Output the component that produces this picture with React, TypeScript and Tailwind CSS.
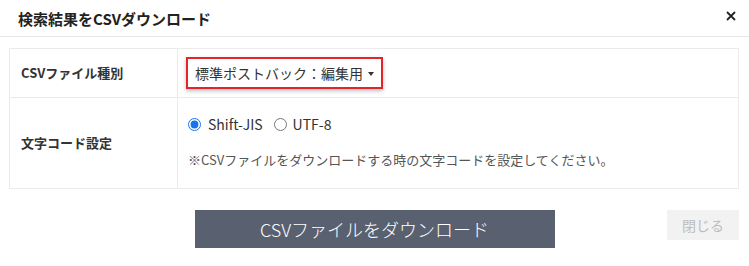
import { useState } from "react"

const font = { fontFamily: '"Noto Sans CJK JP", "Noto Sans", sans-serif' }

export default function App() {
    const [encoding, setEncoding] = useState("sjis")

    return (
        <div className="w-[749px] h-[266px] bg-white text-[#333]" style={font}>
            {/* header */}
            <div className="h-[37px] border-b border-[#e8e8e8] flex items-center justify-between pl-[18px] pr-[13px]">
                <h1 className="text-[15px] font-bold leading-none text-[#222]">検索結果をCSVダウンロード</h1>
                <button className="-mt-[4px]">
                    <svg width="10" height="10" viewBox="0 0 10 10">
                        <path d="M1 1L9 9M9 1L1 9" stroke="#222" strokeWidth="1.8" />
                    </svg>
                </button>
            </div>

            {/* body */}
            <div className="pt-[11px] px-[9px]">
                <table className="w-[730px] border-collapse border border-[#ebebeb] text-[13px]">
                    <tbody>
                        <tr className="h-[49px]">
                            <th className="w-[168px] border border-[#ebebeb] text-left font-bold pl-[11px]">
                                CSVファイル種別
                            </th>
                            <td className="border border-[#ebebeb] pl-[8px]">
                                <div className="w-[197px] h-[32px] border-2 border-[#e3242b] shadow-[0_2px_4px_rgba(0,0,0,0.25)] flex items-center pl-[7px] text-[14px] text-[#333]">
                                    標準ポストバック：編集用
                                    <span className="ml-[5px] mt-[1px] w-0 h-0 border-l-[3.5px] border-r-[3.5px] border-t-[4px] border-l-transparent border-r-transparent border-t-[#333]" />
                                </div>
                            </td>
                        </tr>
                        <tr className="h-[91px]">
                            <th className="border border-[#ebebeb] text-left font-bold pl-[11px]">
                                文字コード設定
                            </th>
                            <td className="border border-[#ebebeb] pl-[10px] align-top pt-[18px]">
                                <div className="flex items-center text-[14px] h-[17px]">
                                    <label className="flex items-center">
                                        <input
                                            type="radio"
                                            name="enc"
                                            checked={encoding === "sjis"}
                                            onChange={() => setEncoding("sjis")}
                                            className="w-[13px] h-[13px] m-0 accent-[#1a73e8]"
                                        />
                                        <span className="ml-[7px]">Shift-JIS</span>
                                    </label>
                                    <label className="flex items-center ml-[11px]">
                                        <input
                                            type="radio"
                                            name="enc"
                                            checked={encoding === "utf8"}
                                            onChange={() => setEncoding("utf8")}
                                            className="w-[13px] h-[13px] m-0 accent-[#1a73e8]"
                                        />
                                        <span className="ml-[6px]">UTF-8</span>
                                    </label>
                                </div>
                                <p className="mt-[17px] text-[13px] text-[#555]">
                                    ※CSVファイルをダウンロードする時の文字コードを設定してください。
                                </p>
                            </td>
                        </tr>
                    </tbody>
                </table>
            </div>

            {/* footer */}
            <div className="mt-[21px] grid grid-cols-[1fr_auto_1fr] items-start px-[10px]">
                <div />
                <button className="w-[360px] h-[38px] bg-[#596170] text-white text-[18px] font-light">
                    CSVファイルをダウンロード
                </button>
                <button className="justify-self-end w-[72px] h-[30px] bg-[#f2f2f2] text-[#bdbdbd] text-[14px]">
                    閉じる
                </button>
            </div>
        </div>
    )
}
